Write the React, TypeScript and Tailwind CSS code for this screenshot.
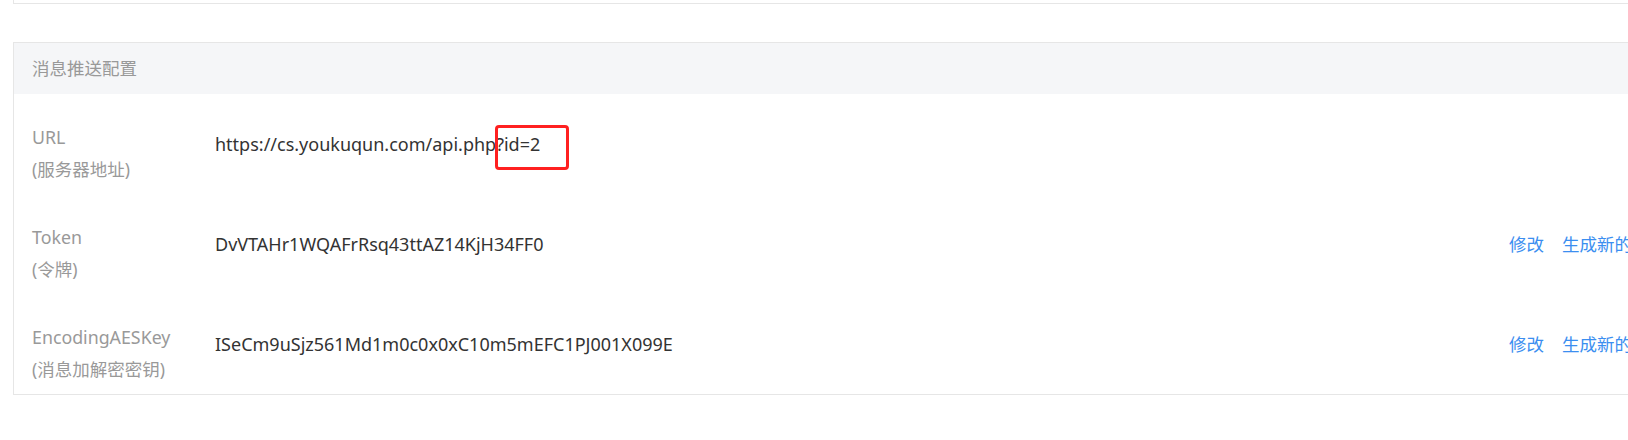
import React from "react";

const rows = [
  {
    label: "URL",
    sub: "(服务器地址)",
    value: "https://cs.youkuqun.com/api.php?id=2",
    mark: true,
    actions: false,
  },
  {
    label: "Token",
    sub: "(令牌)",
    value: "DvVTAHr1WQAFrRsq43ttAZ14KjH34FF0",
    mark: false,
    actions: true,
  },
  {
    label: "EncodingAESKey",
    sub: "(消息加解密密钥)",
    value: "ISeCm9uSjz561Md1m0c0x0xC10m5mEFC1PJ001X099E",
    mark: false,
    actions: true,
  },
];

export default function App() {
  return (
    <div
      className="w-full h-[440px] overflow-hidden bg-white text-[17.5px]"
      style={{ fontFamily: '"Noto Sans", "Noto Sans CJK SC", sans-serif' }}
    >
      {/* previous card, only its bottom edge is visible */}
      <div className="ml-[13px] w-[1700px] h-[4px] border-l border-b border-[#e6e6e6]" />

      <div className="ml-[13px] mt-[38px] w-[1700px] border border-[#e6e6e6]">
        <div className="h-[51px] bg-[#f5f6f8] pl-[18px] flex items-center text-[#999]">
          消息推送配置
        </div>

        {rows.map((row) => (
          <div key={row.label} className="flex h-[100px] pt-[27px] pl-[18px]">
            <div className="w-[183px] shrink-0 leading-[32px] text-[#999]">
              <div className="text-[17.8px]">{row.label}</div>
              <div>{row.sub}</div>
            </div>
            <div className="w-[1294px] shrink-0 mt-[7px] leading-[32px] text-[18px] text-[#333]">
              <span className="relative">
                {row.value}
                {row.mark && (
                  <span className="absolute left-[280px] top-[-7px] w-[74px] h-[45px] border-[3px] border-[#ff2020] rounded-[4px]" />
                )}
              </span>
            </div>
            {row.actions && (
              <div className="mt-[7px] leading-[32px] flex gap-[18px] text-[#3b8ef0] whitespace-nowrap">
                <span>修改</span>
                <span>生成新的密钥</span>
              </div>
            )}
          </div>
        ))}
      </div>
    </div>
  );
}
